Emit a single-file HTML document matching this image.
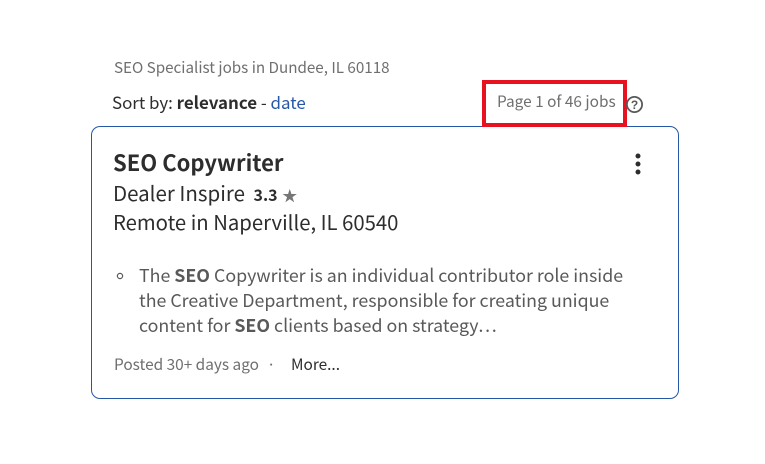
<!DOCTYPE html>
<html><head><meta charset="utf-8"><style>
body{margin:0;width:765px;height:464px;background:#fff;position:relative;font-family:"Noto Sans CJK JP","Liberation Sans",sans-serif;overflow:hidden}
.a{position:absolute;white-space:nowrap;line-height:1}
.card{position:absolute;left:91px;top:126px;width:586px;height:271px;border:1px solid #2557a7;border-radius:9px;box-sizing:content-box}
.red{position:absolute;left:482px;top:80px;width:137px;height:39px;border:4px solid #e8111f}
</style></head><body>
<div class="a" style="left:114px;top:60px;font-size:15.2px;color:#6f6f6f">SEO Specialist jobs in Dundee, IL 60118</div>
<div class="a" style="left:112px;top:94px;font-size:16.9px;color:#2d2d2d">Sort by: <b>relevance</b> - <span style="color:#2557a7">date</span></div>
<div class="card"></div>
<div class="red"></div>
<div class="a" style="left:497px;top:94px;font-size:15.4px;color:#6f6f6f">Page 1 of 46 jobs</div>
<svg class="a" style="left:625px;top:95px" width="19" height="19" viewBox="0 0 19 19"><circle cx="9.5" cy="9.5" r="7.6" fill="none" stroke="#595959" stroke-width="1.8"/><text x="9.5" y="14" font-size="12" font-weight="bold" text-anchor="middle" fill="#595959" font-family="Liberation Sans,sans-serif">?</text></svg>
<div class="a" style="left:113px;top:151px;font-size:22px;font-weight:bold;color:#2d2d2d">SEO Copywriter</div>
<svg class="a" style="left:634px;top:152px" width="8" height="26"><circle cx="4" cy="4" r="2.5" fill="#2d2d2d"/><circle cx="4" cy="12" r="2.5" fill="#2d2d2d"/><circle cx="4" cy="20" r="2.5" fill="#2d2d2d"/></svg>
<div class="a" style="left:113px;top:182px;font-size:20.5px;color:#2d2d2d">Dealer Inspire <b style="font-size:16px;margin-left:4px">3.3</b> <span style="font-size:15px;color:#767676">★</span></div>
<div class="a" style="left:113px;top:211px;font-size:20.3px;color:#2d2d2d">Remote in Naperville, IL 60540</div>
<svg class="a" style="left:116px;top:272px" width="8" height="8"><circle cx="4" cy="4" r="2.6" fill="none" stroke="#595959" stroke-width="1.2"/></svg>
<div style="position:absolute;left:139px;top:263px;width:500px;font-size:17.8px;line-height:25px;color:#595959">The <b>SEO</b> Copywriter is an individual contributor role inside the Creative Department, responsible for creating unique content for <b>SEO</b> clients based on strategy…</div>
<div class="a" style="left:114px;top:357px;font-size:15.4px;color:#6f6f6f">Posted 30+ days ago</div>
<div class="a" style="left:267px;top:357px;font-size:15px;color:#6f6f6f">·</div>
<div class="a" style="left:291px;top:357px;font-size:15.4px;color:#2d2d2d">More...</div>
</body></html>
